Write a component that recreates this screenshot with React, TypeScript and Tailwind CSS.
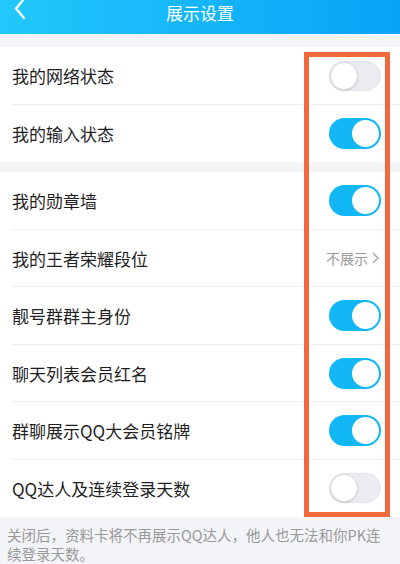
import React from "react";

const font = { fontFamily: '"Noto Sans CJK SC", "Noto Sans", sans-serif' };

function Toggle({ on }: { on: boolean }) {
  if (on) {
    return (
      <div className="relative h-[31px] w-[52px] rounded-full bg-[#12b7f5]">
        <div className="absolute right-[2px] top-[2px] h-[27px] w-[27px] rounded-full bg-white" />
      </div>
    );
  }
  return (
    <div className="relative h-[30px] w-[52px] rounded-full border border-[#e2e2e8] bg-[#ebebf1]">
      <div className="absolute left-0 top-0 h-[28px] w-[28px] rounded-full border border-[#dcdce2] bg-white shadow-[0_1px_2px_rgba(0,0,0,0.12)]" />
    </div>
  );
}

function Row({ label, on, last, right }: { label: string; on?: boolean; last?: boolean; right?: React.ReactNode }) {
  return (
    <div className="relative flex h-[57.5px] items-center justify-between bg-white pl-[12px] pr-[19px]">
      <span className="text-[17px] text-[#1f1f1f]">{label}</span>
      {right ?? <Toggle on={!!on} />}
      {!last && <div className="absolute bottom-0 left-[12px] right-0 h-px bg-[#ededf0]" />}
    </div>
  );
}

export default function App() {
  return (
    <div className="relative h-[564px] w-[400px] overflow-hidden bg-[#f3f4f8]" style={font}>
      <div className="relative flex h-[34px] items-start justify-center bg-gradient-to-r from-[#22c8fa] to-[#08a3f8]">
        <svg className="absolute left-[13px] top-[-2px]" width="14" height="22" viewBox="0 0 14 22">
          <path d="M11 1 L3 10.5 L11 20" stroke="white" strokeWidth="2.2" fill="none" strokeLinecap="round" strokeLinejoin="round" />
        </svg>
        <span className="pt-[1px] text-[17px] leading-[24px] text-white">展示设置</span>
      </div>
      <div className="h-[13px]" />
      <Row label="我的网络状态" on={false} />
      <Row label="我的输入状态" on={true} last />
      <div className="h-[10px]" />
      <Row label="我的勋章墙" on={true} />
      <Row
        label="我的王者荣耀段位"
        right={
          <div className="flex items-center gap-[4px] pr-[2px] text-[14px] text-[#9a9a9a]">
            <span>不展示</span>
            <svg width="7" height="12" viewBox="0 0 7 12">
              <path d="M1 1 L6 6 L1 11" stroke="#a8a8a8" strokeWidth="1.4" fill="none" />
            </svg>
          </div>
        }
      />
      <Row label="靓号群群主身份" on={true} />
      <Row label="聊天列表会员红名" on={true} />
      <Row label="群聊展示QQ大会员铭牌" on={true} />
      <Row label="QQ达人及连续登录天数" on={false} last />
      <div className="px-[7px] pt-[8px] text-[14.5px] leading-[19px] text-[#999]">
        关闭后，资料卡将不再展示QQ达人，他人也无法和你PK连
        <br />
        续登录天数。
      </div>
      <div className="absolute left-[304px] top-[52px] h-[465px] w-[86px] border-[5px] border-[#f06a3c]" />
    </div>
  );
}
